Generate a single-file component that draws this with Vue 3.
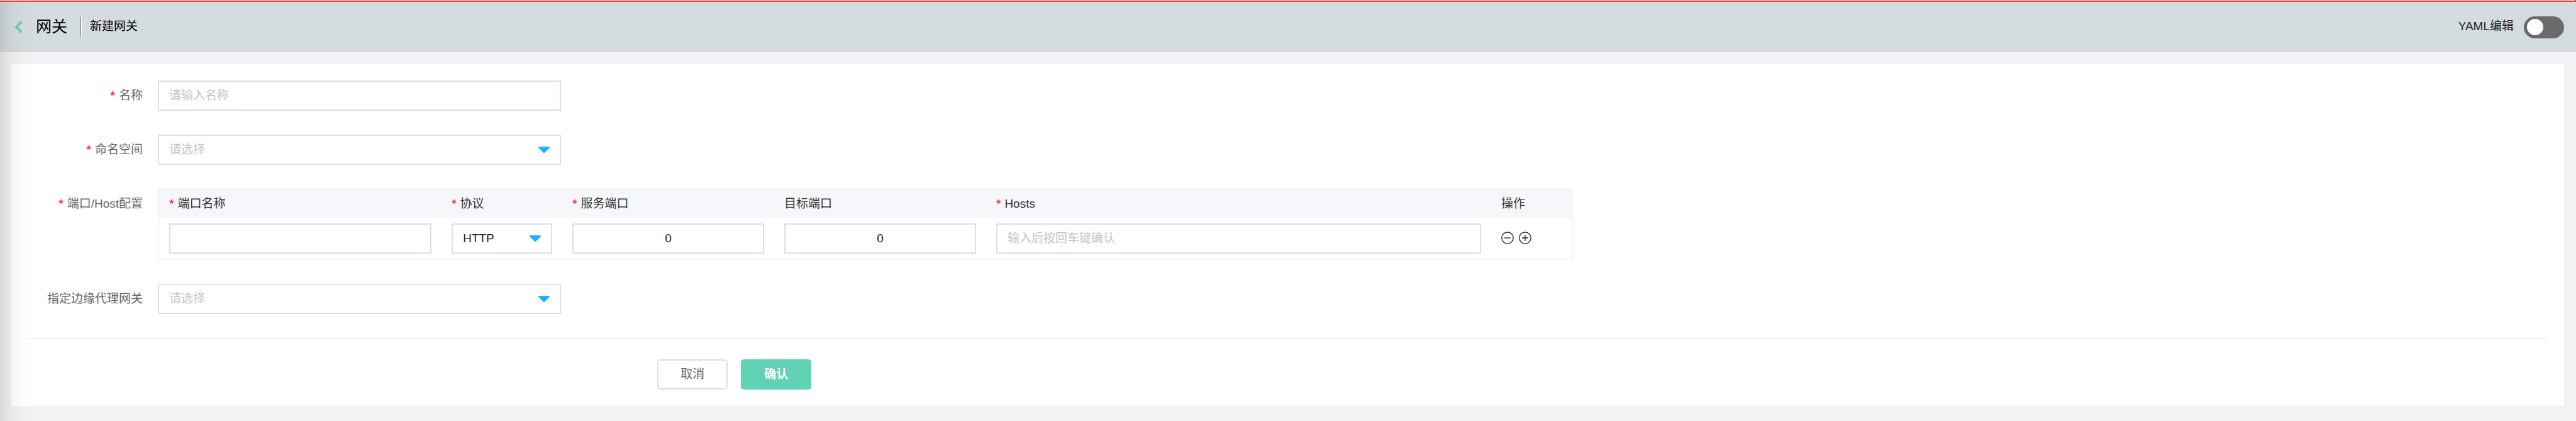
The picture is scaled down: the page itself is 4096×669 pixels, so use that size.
<script setup>
import { ref } from 'vue'

const yamlMode = ref(false)
const name = ref('')
const namespace = ref('')
const edgeGateway = ref('')
const ports = ref([{ name: '', protocol: 'HTTP', port: '0', target: '0', hosts: '' }])

function addPort() {
  ports.value.push({ name: '', protocol: 'HTTP', port: '0', target: '0', hosts: '' })
}
function removePort(index) {
  if (ports.value.length > 1) ports.value.splice(index, 1)
}
</script>

<template>
  <div class="page">
    <div class="notice"></div>
    <header class="topbar">
      <button class="back" type="button" aria-label="返回">
        <svg viewBox="0 0 13 20" width="13" height="20"><path d="M11.500 1.500 3 10l8.500 8.500" fill="none" stroke="#5fd0b4" stroke-width="3.600" /></svg>
      </button>
      <h1 class="title">网关</h1>
      <span class="divider"></span>
      <span class="subtitle">新建网关</span>
      <label class="yaml">
        <span class="yaml-text">YAML编辑</span>
        <input v-model="yamlMode" class="switch" type="checkbox" role="switch" />
      </label>
    </header>

    <main class="card">
      <form @submit.prevent>
        <div class="row">
          <label class="label" for="name"><i class="req">*</i>名称</label>
          <input id="name" v-model="name" class="box field" type="text" placeholder="请输入名称" />
        </div>
        <div class="row">
          <label class="label" for="namespace"><i class="req">*</i>命名空间</label>
          <div class="select field">
            <select id="namespace" v-model="namespace" class="box empty">
              <option value="">请选择</option>
            </select>
            <svg class="arrow" viewBox="0 0 18 10" width="18" height="10"><path d="M1.6 0h14.8c1.4 0 2 1.200 1.100 2.200L10.200 9.400c-.7.8-1.700.8-2.400 0L.5 2.200C-.4 1.200.2 0 1.600 0z" fill="#1fb0ff" /></svg>
          </div>
        </div>
        <div class="row">
          <span class="label"><i class="req">*</i>端口/Host配置</span>
          <table class="ports">
            <colgroup>
              <col class="c-name" /><col class="c-protocol" /><col class="c-port" /><col class="c-port" /><col class="c-hosts" /><col />
            </colgroup>
            <thead>
              <tr>
                <th><i class="req">*</i>端口名称</th>
                <th><i class="req">*</i>协议</th>
                <th><i class="req">*</i>服务端口</th>
                <th>目标端口</th>
                <th><i class="req">*</i>Hosts</th>
                <th>操作</th>
              </tr>
            </thead>
            <tbody>
              <tr v-for="(p, i) in ports" :key="i">
                <td><input v-model="p.name" class="box" type="text" aria-label="端口名称" /></td>
                <td>
                  <div class="select">
                    <select v-model="p.protocol" class="box" aria-label="协议">
                      <option>HTTP</option>
                    </select>
                    <svg class="arrow" viewBox="0 0 18 10" width="18" height="10"><path d="M1.6 0h14.8c1.4 0 2 1.200 1.100 2.200L10.200 9.400c-.7.8-1.700.8-2.400 0L.5 2.200C-.4 1.200.2 0 1.600 0z" fill="#1fb0ff" /></svg>
                  </div>
                </td>
                <td><input v-model="p.port" class="box number" type="text" inputmode="numeric" aria-label="服务端口" /></td>
                <td><input v-model="p.target" class="box number" type="text" inputmode="numeric" aria-label="目标端口" /></td>
                <td><input v-model="p.hosts" class="box" type="text" placeholder="输入后按回车键确认" aria-label="Hosts" /></td>
                <td>
                  <div class="ops">
                    <button type="button" aria-label="删除" @click="removePort(i)">
                      <svg viewBox="0 0 20 20" width="20" height="20" fill="none" stroke="#222" stroke-width="1.300"><circle cx="10" cy="10" r="9.200" /><path d="M5 10h10" /></svg>
                    </button>
                    <button type="button" aria-label="添加" @click="addPort">
                      <svg viewBox="0 0 20 20" width="20" height="20" fill="none" stroke="#222" stroke-width="1.300"><circle cx="10" cy="10" r="9.200" /><path d="M5 10h10M10 5v10" /></svg>
                    </button>
                  </div>
                </td>
              </tr>
            </tbody>
          </table>
        </div>
        <div class="row">
          <label class="label" for="edge">指定边缘代理网关</label>
          <div class="select field">
            <select id="edge" v-model="edgeGateway" class="box empty">
              <option value="">请选择</option>
            </select>
            <svg class="arrow" viewBox="0 0 18 10" width="18" height="10"><path d="M1.6 0h14.8c1.4 0 2 1.200 1.100 2.200L10.200 9.400c-.7.8-1.700.8-2.400 0L.5 2.200C-.4 1.200.2 0 1.600 0z" fill="#1fb0ff" /></svg>
          </div>
        </div>
        <footer class="actions">
          <button class="btn" type="button">取消</button>
          <button class="btn primary" type="submit">确认</button>
        </footer>
      </form>
    </main>
    <div class="side-shadow"></div>
  </div>
</template>

<style>
body {
  background: #f2f2f4;
}
</style>

<style scoped>
.page,
.page * {
  box-sizing: border-box;
}
.page {
  position: relative;
  min-height: 100vh;
  background: #f2f2f4;
  color: #222;
  font-family: "Liberation Sans", "Noto Sans CJK SC", sans-serif;
  font-size: 19px;
  line-height: 24px;
}
button,
input,
select {
  font: inherit;
  color: inherit;
  margin: 0;
}
button {
  padding: 0;
  border: 0;
  background: none;
  cursor: pointer;
}
svg {
  display: block;
}
.notice {
  height: 3px;
  background: #fde4e7;
  border-bottom: 2px solid #ff3a3f;
  border-right: 2px solid #ff3a3f;
}
.topbar {
  display: flex;
  align-items: center;
  height: 80px;
  padding: 0 19px 0 23px;
  background: #d5dce0;
  color: #000;
}
.title {
  margin: 0 0 0 21px;
  padding-bottom: 2px;
  font-size: 25px;
  font-weight: 400;
  line-height: 32px;
}
.divider {
  width: 3px;
  height: 32px;
  margin: 0 13px 0 20px;
  background: #fff;
  border-left: 2px solid #a0a0a0;
}
.subtitle {
  padding-bottom: 2px;
}
.yaml {
  display: flex;
  align-items: center;
  gap: 16px;
  margin-left: auto;
  color: #222;
}
.yaml-text {
  padding-bottom: 2px;
}
.switch {
  appearance: none;
  display: flex;
  align-items: center;
  width: 64px;
  height: 35px;
  padding: 0 5px;
  border-radius: 18px;
  background: #6a6a6a;
}
.switch::before {
  content: "";
  width: 26px;
  height: 26px;
  border-radius: 50%;
  background: #fff;
}
.switch:checked {
  justify-content: flex-end;
  background: #61d2b4;
}
.card {
  margin: 19px 19px 24px 18px;
  padding: 26px 25px;
  background: #fff;
}
.row {
  display: flex;
  align-items: flex-start;
  gap: 24px;
  margin-bottom: 38px;
}
.label {
  flex: none;
  width: 184px;
  padding: 12px 0;
  text-align: right;
  color: #666;
}
.req {
  margin-right: 6px;
  color: #ff3a3f;
  font-style: normal;
  font-weight: 700;
}
.field {
  width: 641px;
}
.box {
  display: block;
  height: 48px;
  padding: 0 16px 1px;
  border: 2px solid #d8e0e8;
  border-radius: 0;
  background: #fff;
  outline: none;
}
.box::placeholder {
  color: #c4c4c4;
  opacity: 1;
}
.select {
  display: grid;
  align-items: center;
}
.select > * {
  grid-area: 1 / 1;
}
.select .box,
.ports .box {
  appearance: none;
  width: 100%;
}
.box.empty {
  color: #c4c4c4;
}
.number {
  text-align: center;
}
.arrow {
  justify-self: end;
  margin-right: 18px;
  pointer-events: none;
}
.ports {
  width: 2250px;
  table-layout: fixed;
  border: 2px solid #f0f2f5;
  border-spacing: 0;
}
.c-name {
  width: 20%;
}
.c-protocol {
  width: 192px;
}
.c-port {
  width: 15%;
}
.c-hosts {
  width: 803px;
}
.ports th {
  height: 45px;
  padding: 10px 16px 11px;
  background: #f6f7fb;
  color: #333;
  font-weight: 400;
  text-align: left;
}
.ports td {
  padding: 8px 16px;
}
.ops {
  display: flex;
  gap: 8px;
  padding-bottom: 2px;
}
.actions {
  display: flex;
  gap: 21px;
  padding: 32px 0 0 25%;
  border-top: 2px solid #eee;
}
.btn {
  width: 112px;
  height: 48px;
  padding-bottom: 1px;
  border: 2px solid #d8e0e8;
  border-radius: 5px;
  background: #fff;
  color: #666;
}
.primary {
  border-color: #61d2b4;
  background: #61d2b4;
  color: #fff;
  font-weight: 700;
}
.side-shadow {
  position: absolute;
  inset: 3px auto 0 0;
  width: 54px;
  background: linear-gradient(90deg, rgba(0, 0, 0, 0.1), rgba(0, 0, 0, 0.04) 34%, rgba(0, 0, 0, 0.01) 70%, transparent);
  pointer-events: none;
}
</style>
